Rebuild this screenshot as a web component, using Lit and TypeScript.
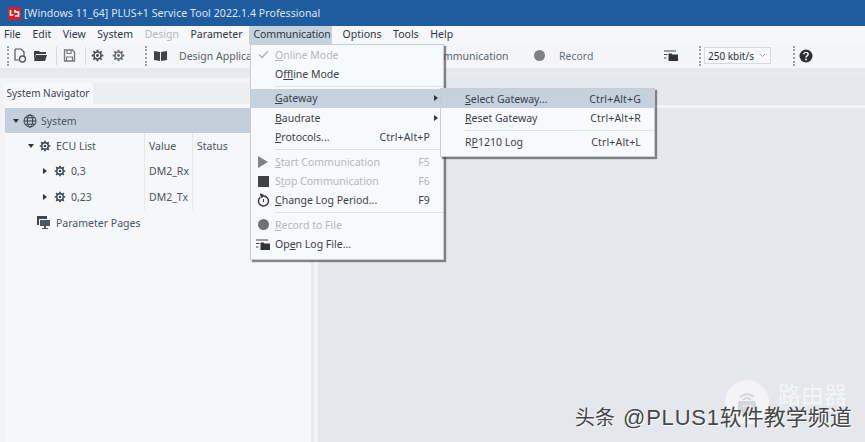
import { LitElement, html, css } from "lit";
import { customElement } from "lit/decorators.js";

const gear = (s = 14, c = "#3c4650") => html`<svg class="ic" width=${s} height=${s} viewBox="0 0 14 14"><g stroke=${c} fill="none"><circle cx="7" cy="7" r="3.8" stroke-width="1.7"/><path stroke-width="2" d="M7 .8v2M7 11.2v2M.8 7h2M11.2 7h2M2.6 2.6l1.4 1.4M10 10l1.4 1.4M2.6 11.4L4 10M10 4l1.4-1.4"/></g><circle cx="7" cy="7" r="1.5" fill=${c}/></svg>`;
const grip = html`<span class="grip"></span>`;
const sep = html`<span class="vsep"></span>`;
const logIcon = html`<svg class="ic" width="14" height="11" viewBox="0 0 14 11"><path d="M0 1h12M0 4.5h3.5M0 8h2.5" stroke="#444" stroke-width="1.1"/><path d="M4.5 3.5h3l1 1H14V11H4.5z" fill="#333"/></svg>`;

@customElement("app-root")
export class AppRoot extends LitElement {
  static styles = css`
    :host { display: block; width: 865px; height: 442px; position: relative; overflow: hidden;
      font-family: "Noto Sans", "Open Sans", sans-serif; font-size: 10.5px; color: #333a42; background: #f4f6fa; }
    .ic { display: block; flex: none; }
    u { text-decoration-thickness: 1px; text-underline-offset: 1px; }
    .page { display: flex; flex-direction: column; height: 442px; }
    .title { height: 26px; background: #1e5c9f; color: #dfe6ef; display: flex; align-items: center; padding-left: 8px; gap: 3px; letter-spacing: .08px; flex: none; }
    .menubar { height: 18px; background: #f5f7fb; display: flex; align-items: center; flex: none; color: #2f353c; }
    .menubar span { padding: 0 5.8px; height: 18px; line-height: 17px; }
    .menubar .first { padding-left: 4px; }
    .menubar .dis { color: #b4b8bd; }
    .menubar .on { background: #c5d2de; padding: 0 1px 0 4px; margin: 0 5px 0 1px; letter-spacing: -.1px; }
    .toolbar { height: 24px; padding-bottom: 1px; box-sizing: border-box; background: #f3f5f9; display: flex; align-items: center; flex: none; color: #5b636b; }
    .grip { width: 0; height: 20px; border-left: 2px dotted #9ba0a6; flex: none; }
    .vsep { width: 1px; height: 18px; background: #d5d8dd; flex: none; }
    .combo { width: 67px; height: 17px; box-sizing: border-box; border: 1px solid #d6d9de; background: #f8f9fc; display: flex; align-items: center; justify-content: space-between; padding: 0 4px 0 3px; font-size: 10px; color: #2b2f33; flex: none; }
    .band { height: 10px; background: #e8e9ee; flex: none; }
    .main { flex: 1; display: flex; min-height: 0; }
    .left { width: 311px; flex: none; display: flex; flex-direction: column; background: #f2f3f7; padding-left: 2px; box-sizing: border-box; }
    .tabs { height: 21px; margin-top: 5px; background: #eceef2; display: flex; flex: none; margin-left: 1px; }
    .tab { width: 90px; background: #f7f8fb; font-size: 10px; line-height: 21px; text-align: center; color: #3d444b; }
    .pane { flex: 1; background: #f5f7fb; padding-top: 4px; margin-left: 3px; }
    .sys { height: 25px; background: #c3d0dc; display: flex; align-items: center; padding-left: 8px; gap: 4px; color: #4a5660; }
    .row { height: 25.6px; display: flex; align-items: center; color: #4a5660; }
    .cell-name { width: 139px; display: flex; align-items: center; flex: none; }
    .cell { height: 100%; display: flex; align-items: center; padding-left: 4px; box-sizing: border-box; border-left: 1px solid #e6e8ec; }
    .c1 { width: 48px; } .c2 { width: 60px; }
    .arrow { width: 0; height: 0; border-left: 3px solid transparent; border-right: 3px solid transparent; border-top: 4px solid #333; flex: none; }
    .arrow.r { border-top: 3px solid transparent; border-bottom: 3px solid transparent; border-left: 4px solid #333; border-right: 0; }
    .split { width: 7px; flex: none; background: linear-gradient(90deg, #e8e9ee 0 3px, #f3f4f8 3px 100%); }
    .right { flex: 1; background: #e6e7ec; display: flex; flex-direction: column; }
    .stripe { height: 3px; margin-top: 27px; background: #f3f4f8; }
    .menu { position: absolute; background: #f8f9fd; border: 1px solid #c9ccd2; box-shadow: 2px 2px 1px rgba(60,60,60,.6); box-sizing: border-box; color: #3a4148; }
    .m1 { left: 250px; top: 44px; width: 194px; height: 216px; }
    .m2 { left: 440px; top: 88px; width: 215px; height: 69px; }
    .item { display: flex; align-items: center; height: 19.4px; }
    .item .g { width: 24px; flex: none; display: flex; justify-content: center; }
    .item .t { flex: 1; white-space: nowrap; }
    .item .k { white-space: nowrap; padding-right: 13px; letter-spacing: .15px; }
    .item.dis { color: #b3b7bc; }
    .item.hi { background: #c5d2de; }
    .tri { width: 0; height: 0; border-top: 3px solid transparent; border-bottom: 3px solid transparent; border-left: 4px solid #333; margin-right: 5px; }
    .hs { height: 1px; background: #dfe2e7; margin: 2px 0 2px 24px; }
    .wm { position: absolute; left: 725px; top: 380px; width: 44px; height: 44px; border-radius: 50%; background: rgba(255,255,255,.55); }
    .wm2 { position: absolute; left: 778px; top: 381px; font-size: 23px; line-height: 24px; color: rgba(255,255,255,.6); font-family: "Noto Sans CJK SC", sans-serif; }
    .wm3 { position: absolute; left: 575px; top: 406px; line-height: 24px; font-size: 22px; color: #45474a; text-shadow: 1px 1px 0 #fff; font-family: "Liberation Sans", "Noto Sans CJK SC", sans-serif; white-space: nowrap; display: flex; align-items: center; }
    .wa { font-size: 20px; width: 48px; flex: none; }
    .wb { letter-spacing: .8px; }
  `;

  render() {
    return html`
      <div class="page">
        <div class="title">
          <svg class="ic" width="13" height="13" viewBox="0 0 13 13"><rect width="13" height="13" rx="1.5" fill="#d3202e"/><path d="M2.5 3v5h3M7 3v2h3.5v4H7" stroke="#fff" stroke-width="1.6" fill="none"/></svg>
          <span>[Windows 11_64] PLUS+1 Service Tool 2022.1.4 Professional</span>
        </div>
        <div class="menubar">
          <span class="first">File</span><span>Edit</span><span>View</span><span>System</span><span class="dis">Design</span><span>Parameter</span><span class="on">Communication</span><span>Options</span><span>Tools</span><span>Help</span>
        </div>
        <div class="toolbar">
          <span style="width:7px"></span>${grip}
          <span style="width:4px"></span>
          <svg class="ic" width="14" height="15" viewBox="0 0 14 15"><path d="M2 1h6l3 3v4M2 1v11h4" fill="none" stroke="#555" stroke-width="1.2"/><circle cx="9.5" cy="11" r="3" fill="none" stroke="#555" stroke-width="1.3"/></svg>
          <span style="width:7px"></span>
          <svg class="ic" width="13" height="11" viewBox="0 0 13 11"><path d="M0 1h5l1 1h6v2H2L0 10zM2 5h11l-2 6H0z" fill="#3a3f45"/></svg>
          <span style="width:9px"></span>${sep}<span style="width:6px"></span>
          <svg class="ic" width="13" height="13" viewBox="0 0 13 13"><path d="M1.5 12V1h8l2 2v9z" fill="none" stroke="#777" stroke-width="1.3"/><path d="M4 1.5v3h4v-3M3.5 12V8h6v4" fill="none" stroke="#777" stroke-width="1.2"/></svg>
          <span style="width:9px"></span>${sep}<span style="width:5px"></span>
          ${gear(13, "#404850")}
          <span style="width:8px"></span>
          ${gear(13, "#666")}
          <span style="width:20px"></span>${grip}
          <span style="width:7px"></span>
          <svg class="ic" width="13" height="11" viewBox="0 0 13 11"><path d="M0 1l6 1v9l-6-1zM13 1l-6 1v9l6-1z" fill="#3e444a"/></svg>
          <span style="width:12px"></span>
          <span style="width:251px;white-space:nowrap;flex:none">Design Application</span>
          <span style="white-space:nowrap;width:72px;flex:none">Communication</span>
          <span style="width:32px;flex:none"></span>
          <span style="width:11px;height:11px;border-radius:50%;background:#7d8085;flex:none"></span>
          <span style="width:14px;flex:none"></span>
          <span style="color:#6a7178;width:105px;flex:none">Record</span>
          ${logIcon}
          <span style="width:21px;flex:none"></span>${grip}
          <span style="width:3px;flex:none"></span>
          <div class="combo"><span>250 kbit/s</span><svg width="7" height="5" viewBox="0 0 7 5"><path d="M1 1l2.5 2.5L6 1" fill="none" stroke="#999"/></svg></div>
          <span style="width:22px;flex:none"></span>${grip}
          <span style="width:4px;flex:none"></span>
          <svg class="ic" width="14" height="14" viewBox="0 0 14 14"><circle cx="7" cy="7" r="6.5" fill="#2c2f33"/><path d="M4.9 5.3C5 3.9 6 3.4 7 3.4c1.3 0 2.2.8 2.2 1.9 0 1.6-2.2 1.6-2.2 3.1" fill="none" stroke="#fff" stroke-width="1.4"/><circle cx="7" cy="10.5" r=".9" fill="#fff"/></svg>
        </div>
        <div class="band"></div>
        <div class="main">
          <div class="left">
            <div class="tabs"><div class="tab">System Navigator</div></div>
            <div class="pane">
              <div class="sys"><span class="arrow"></span>
                <svg class="ic" width="14" height="14" viewBox="0 0 14 14"><g fill="none" stroke="#2f3a44" stroke-width="1"><circle cx="7" cy="7" r="6"/><ellipse cx="7" cy="7" rx="2.7" ry="6"/><path d="M1 7h12M2 3.8h10M2 10.2h10"/></g></svg>
                <span>System</span></div>
              <div class="row"><div class="cell-name"><span style="width:23px"></span><span class="arrow"></span><span style="width:5px"></span>${gear(12)}<span style="width:5px"></span>ECU List</div><div class="cell c1">Value</div><div class="cell c2">Status</div></div>
              <div class="row"><div class="cell-name"><span style="width:38px"></span><span class="arrow r"></span><span style="width:7px"></span>${gear(12)}<span style="width:5px"></span>0,3</div><div class="cell c1">DM2_Rx</div><div class="cell c2"></div></div>
              <div class="row"><div class="cell-name"><span style="width:38px"></span><span class="arrow r"></span><span style="width:7px"></span>${gear(12)}<span style="width:5px"></span>0,23</div><div class="cell c1">DM2_Tx</div><div class="cell c2"></div></div>
              <div class="row"><span style="width:32px"></span>
                <svg class="ic" width="13" height="13" viewBox="0 0 13 13"><path d="M0 0h10v3H2v6H0z" fill="#3f464d"/><path d="M3 4h10v6H9v2h2v1H5v-1h2v-2H3z" fill="#4f565d"/></svg>
                <span style="width:6px"></span>Parameter Pages</div>
            </div>
          </div>
          <div class="split"></div>
          <div class="right"><div class="stripe"></div></div>
        </div>
      </div>

      <div class="menu m1">
        <div class="item dis"><span class="g"><svg width="11" height="9" viewBox="0 0 11 9"><path d="M1 4.5l3 3L10 1" fill="none" stroke="#b5b9be" stroke-width="1.6"/></svg></span><span class="t"><u>O</u>nline Mode</span></div>
        <div class="item"><span class="g"></span><span class="t">O<u>f</u>fline Mode</span></div>
        <div class="hs"></div>
        <div class="item hi"><span class="g"></span><span class="t"><u>G</u>ateway</span><span class="tri"></span></div>
        <div class="item"><span class="g"></span><span class="t"><u>B</u>audrate</span><span class="tri"></span></div>
        <div class="item"><span class="g"></span><span class="t"><u>P</u>rotocols...</span><span class="k">Ctrl+Alt+P</span></div>
        <div class="hs"></div>
        <div class="item dis"><span class="g"><svg width="10" height="12" viewBox="0 0 10 12"><path d="M0 0l10 6-10 6z" fill="#7e8388"/></svg></span><span class="t"><u>S</u>tart Communication</span><span class="k">F5</span></div>
        <div class="item dis"><span class="g"><svg width="11" height="11" viewBox="0 0 11 11"><rect width="11" height="11" fill="#3f4348"/></svg></span><span class="t">S<u>t</u>op Communication</span><span class="k">F6</span></div>
        <div class="item"><span class="g"><svg width="13" height="14" viewBox="0 0 13 14"><path d="M3.2 4.2a5 5 0 1 0 3.3-1.2" fill="none" stroke="#333" stroke-width="1.4"/><path d="M6.5 6v3M3.5 .8l3.4 1.8-2.4 2.2z" stroke="#333" fill="#333"/></svg></span><span class="t"><u>C</u>hange Log Period...</span><span class="k">F9</span></div>
        <div class="hs"></div>
        <div class="item dis"><span class="g"><svg width="11" height="11" viewBox="0 0 11 11"><circle cx="5.5" cy="5.5" r="5.5" fill="#6f7378"/></svg></span><span class="t"><u>R</u>ecord to File</span></div>
        <div class="item"><span class="g">${logIcon}</span><span class="t">Op<u>e</u>n Log File...</span></div>
      </div>

      <div class="menu m2">
        <div class="item hi"><span class="g"></span><span class="t"><u>S</u>elect Gateway...</span><span class="k">Ctrl+Alt+G</span></div>
        <div class="item"><span class="g"></span><span class="t"><u>R</u>eset Gateway</span><span class="k">Ctrl+Alt+R</span></div>
        <div class="hs"></div>
        <div class="item"><span class="g"></span><span class="t">R<u>P</u>1210 Log</span><span class="k">Ctrl+Alt+L</span></div>
      </div>

      <div class="wm"><svg width="44" height="44" viewBox="0 0 44 44"><rect x="13" y="21" width="18" height="14" rx="2" fill="rgba(200,203,210,.7)"/><path d="M15 17a10 10 0 0 1 14 0M18 20a5 5 0 0 1 8 0" fill="none" stroke="rgba(200,203,210,.7)" stroke-width="2"/><path d="M18 26h1.5M21.2 26h1.5M24.5 26h1.5" stroke="#fff" stroke-width="1.5"/></svg></div>
      <div class="wm2">路由器</div>
      <div class="wm3"><span class="wa">头条</span><span class="wb">@PLUS1</span><span>软件教学频道</span></div>
    `;
  }
}
